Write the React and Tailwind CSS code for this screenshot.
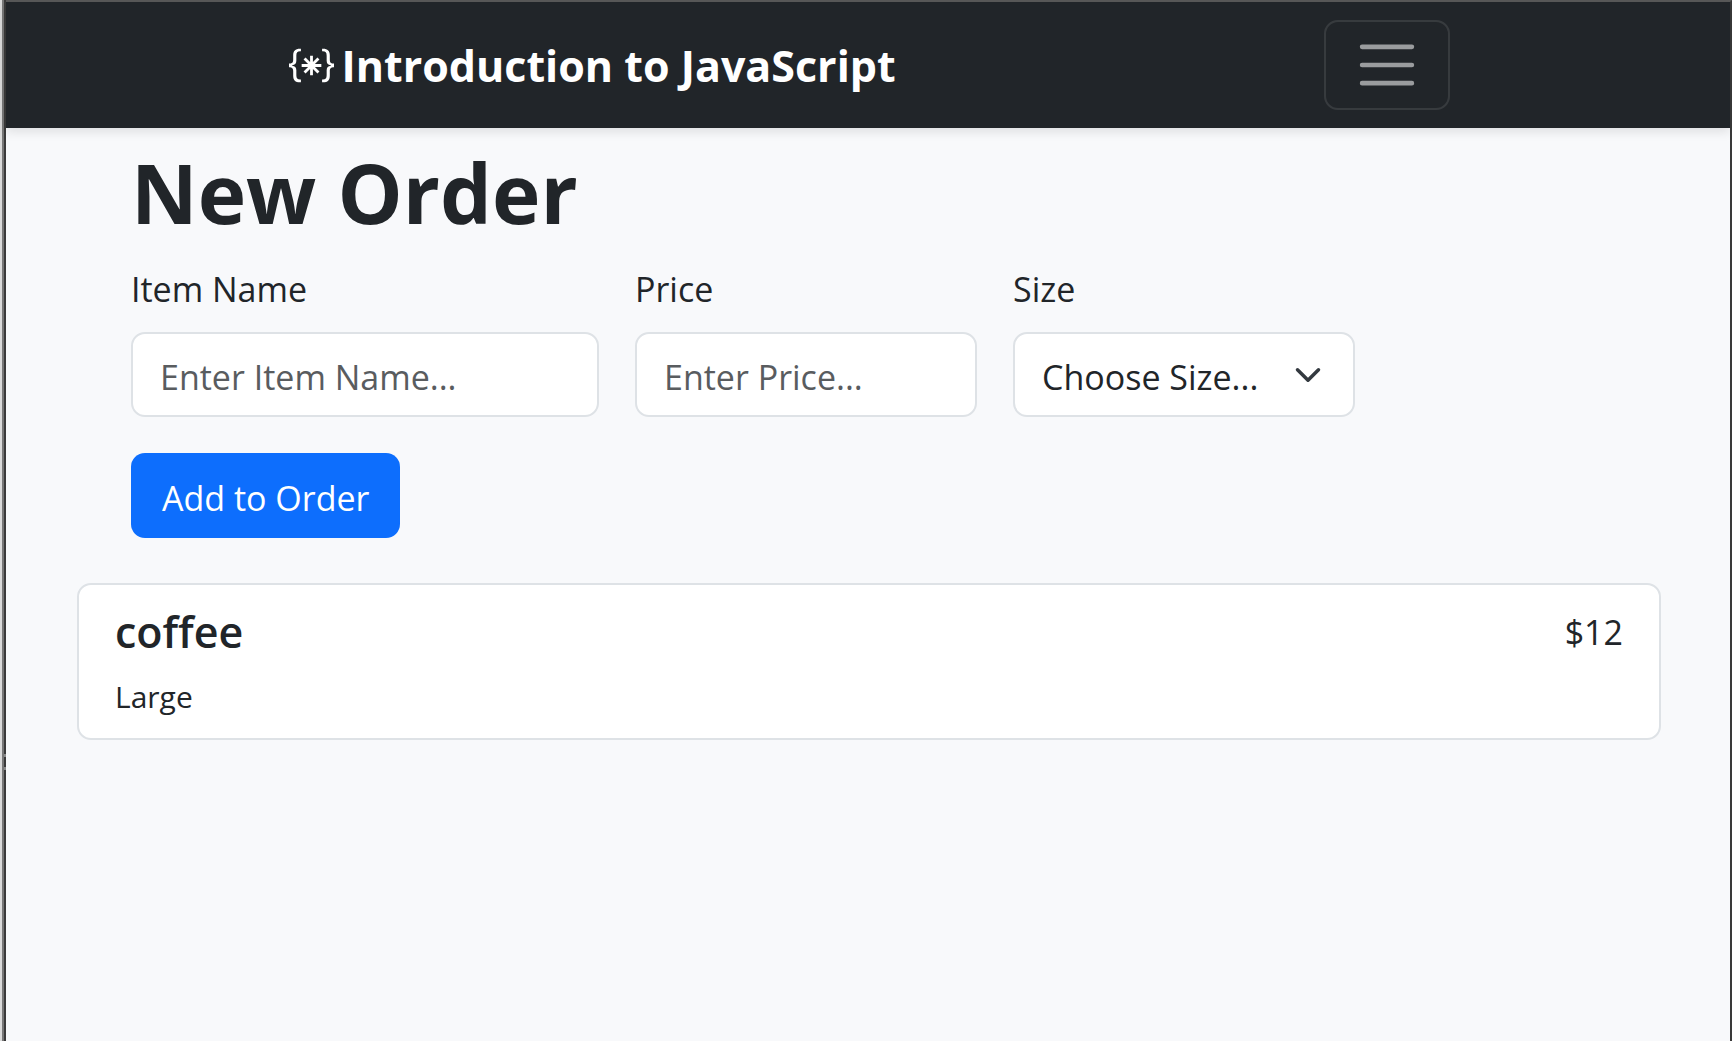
import { useState } from "react";
import { BsBracesAsterisk } from "react-icons/bs";

const fieldClass =
  "h-[85px] w-full rounded-[14px] border-2 border-[#dee2e6] bg-white px-[27px] pt-1 text-[34px] leading-[54px] text-[#212529] placeholder:text-[#595c5f] placeholder:opacity-100 focus:outline-none";
const labelClass = "mb-4 block text-[34px] leading-[54px]";

function Navbar() {
  return (
    <nav className="relative bg-[#212529] py-[18px] pl-0.5 shadow-[0_4px_10px_rgba(0,0,0,0.1)]">
      <div className="mx-auto flex w-full max-w-[1161px] items-center justify-between">
        <a href="#home" className="flex items-center gap-2 text-white">
          <BsBracesAsterisk className="size-[45px] shrink-0" aria-hidden="true" />
          <span className="pt-0.5 text-[43px] leading-[54px] font-bold">Introduction to JavaScript</span>
        </a>
        <button
          type="button"
          aria-label="Toggle navigation"
          className="flex h-[90px] w-[126px] items-center justify-center rounded-[14px] border-2 border-white/10"
        >
          <svg viewBox="0 0 30 30" className="size-[68px]" fill="none" aria-hidden="true">
            <path
              d="M4 7h22M4 15h22M4 23h22"
              stroke="rgba(255,255,255,0.55)"
              strokeWidth="2"
              strokeLinecap="round"
              strokeMiterlimit="10"
            />
          </svg>
        </button>
      </div>
    </nav>
  );
}

function OrderForm() {
  const [size, setSize] = useState("");
  return (
    <form className="px-[54px]" onSubmit={(e) => e.preventDefault()}>
      <h1 className="pt-[10px] text-[82px] leading-[108px] font-bold">New Order</h1>
      <div className="mt-4 grid grid-cols-12 gap-9">
        <div className="col-span-4">
          <label htmlFor="item-name" className={labelClass}>Item Name</label>
          <input id="item-name" type="text" placeholder="Enter Item Name..." className={fieldClass} />
        </div>
        <div className="col-span-3">
          <label htmlFor="item-price" className={labelClass}>Price</label>
          <input id="item-price" type="text" placeholder="Enter Price..." className={fieldClass} />
        </div>
        <div className="col-span-3">
          <label htmlFor="item-size" className={labelClass}>Size</label>
          <div className="relative">
            <select
              id="item-size"
              value={size}
              onChange={(e) => setSize(e.target.value)}
              className={`${fieldClass} appearance-none`}
            >
              <option value="">Choose Size...</option>
              <option value="small">Small</option>
              <option value="medium">Medium</option>
              <option value="large">Large</option>
            </select>
            <svg
              viewBox="0 0 16 16"
              className="pointer-events-none absolute inset-y-0 right-[33px] my-auto size-7"
              fill="none"
              aria-hidden="true"
            >
              <path d="m2 5 6 6 6-6" stroke="#343a40" strokeWidth="2" strokeLinecap="round" strokeLinejoin="round" />
            </svg>
          </div>
        </div>
      </div>
      <button
        type="submit"
        className="mt-9 h-[85px] rounded-[14px] bg-[#0d6efd] px-[31px] pt-1 text-[34px] leading-[54px] text-white"
      >
        Add to Order
      </button>
    </form>
  );
}

function OrderItem({ name, price, size }) {
  return (
    <li className="rounded-[14px] border-2 border-[#dee2e6] bg-white px-9 pt-5 pb-4">
      <div className="flex items-start justify-between">
        <h2 className="text-[43px] leading-[54px] font-semibold">{name}</h2>
        <span className="text-[34px] leading-[54px]">{price}</span>
      </div>
      <p className="mt-3 text-[30px] leading-[51px]">{size}</p>
    </li>
  );
}

export default function App() {
  return (
    <div className="flex min-h-screen font-['Open_Sans','Noto_Sans',sans-serif] text-[#212529]">
      <div className="relative flex w-[6px] shrink-0" aria-hidden="true">
        <div className="flex-1 bg-[#dadada]" />
        <div className="flex-1 bg-[#777777]" />
        <div className="flex-1 bg-[#3a3a3a]" />
        <div className="absolute top-[754px] right-0 h-4 w-[2px] border-y-[3px] border-[#8a8a8a]" />
      </div>
      <div className="min-w-0 flex-1 border-t-2 border-r-2 border-t-[#595959] border-r-[#3a3a3a] bg-[#f8f9fb]">
        <Navbar />
        <main className="pr-[69px] pl-[71px]">
          <OrderForm />
          <ul className="mt-[45px]">
            <OrderItem name="coffee" price="$12" size="Large" />
          </ul>
        </main>
      </div>
    </div>
  );
}
